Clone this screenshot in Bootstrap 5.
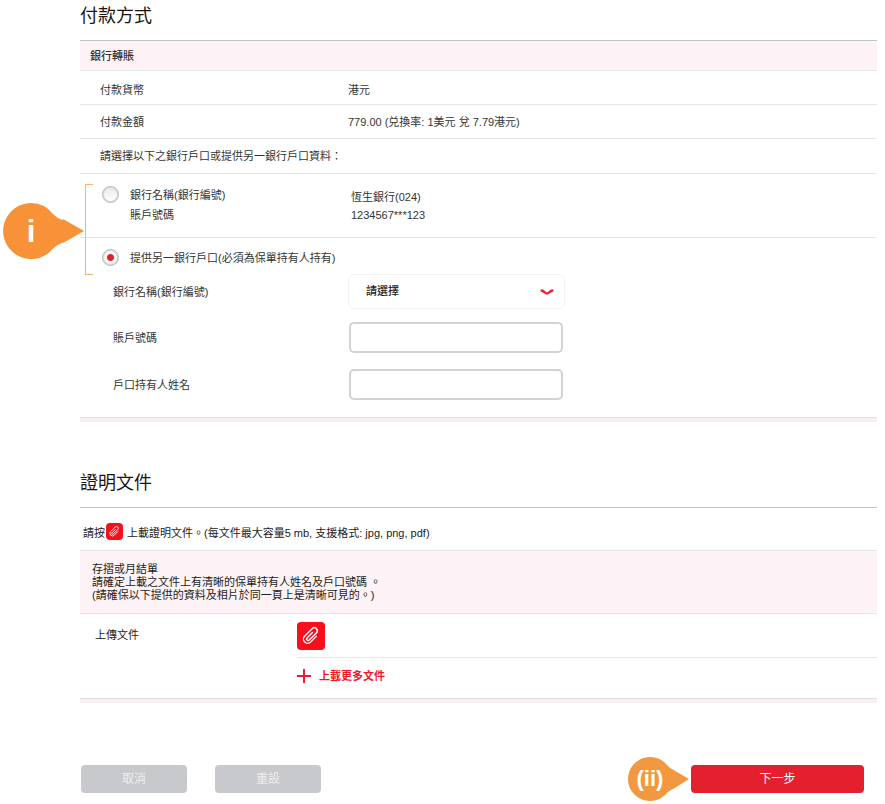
<!DOCTYPE html>
<html lang="zh-Hant">
<head>
<meta charset="utf-8">
<meta name="viewport" content="width=device-width, initial-scale=1">
<title>付款方式</title>
<link href="https://cdn.jsdelivr.net/npm/bootstrap@5.3.0/dist/css/bootstrap.min.css" rel="stylesheet">
<style>
  body { font-family: "Liberation Sans", "Noto Sans CJK TC", sans-serif; font-size: 11px; line-height: 20px; color: #333; background: #fff; }
  main { padding: 0 8px 8px 80px; }
  .sec-title { font-size: 18px; line-height: 32px; font-weight: 400; color: #1e1414; margin: 0; padding-bottom: 8px; }
  .pink { background: #fdf2f5; }
  .line-top { border-top: 1px solid #bfc3ca; }
  .line { border-bottom: 1px solid #e3e5e6; }
  .band { height: 4px; background: #fbeef2; border-top: 1px solid #e0dfe3; box-sizing: content-box; }
  .strip { min-height: 31px; padding-left: 10px; font-weight: 500; }
  .info { min-height: 34px; padding-left: 20px; }
  .info-last { min-height: 35px; }
  .info-name { flex: 0 0 248px; }
  .pick { padding: 11px 0 12px 22px; }
  .pick .pick-name { flex: 0 0 221px; }
  .pick-value { line-height: 18px; padding-top: 3px; }
  .pick-last { padding: 10px 0 6px 22px; }
  .dot { appearance: none; flex: none; width: 17px; height: 17px; margin: 1px 11px 0 0; border: 1px solid #b4b4ba; border-radius: 50%; background: linear-gradient(#e9e9ec, #fff); box-shadow: inset 0 0 0 1px #d8d8dc; }
  .dot:checked { background: radial-gradient(circle, #e5202e 0 3px, #fafafa 4px); }
  .fields { padding: 0 0 17px 33px; }
  .fields label { flex: 0 0 236px; }
  .fields .form-control { width: 214px; height: 31px; border: 2px solid #d2d2d2; border-radius: 5px; font-size: 11px; }
  .fields .form-select { width: 217px; height: 35px; margin-left: -1px; padding: 0 32px 0 17px; border: 1px solid #f3f3f3; border-radius: 6px; font-size: 11px; font-weight: 500; color: #222;
    background-image: url("data:image/svg+xml,%3Csvg xmlns='http://www.w3.org/2000/svg' viewBox='0 0 14 8'%3E%3Cpath d='M1.700 2.500C4.500 3.500 5.500 5.500 7 5.500S9.500 3.500 12.300 2.500' fill='none' stroke='%23ea2334' stroke-width='2.400' stroke-linecap='round'/%3E%3C/svg%3E"); background-size: 14px 8px; background-position: right 10px center; }
  .gap-rows { row-gap: 16px; }
  .gap-rows > :first-child { margin-bottom: -3px; }
  .bracket { position: absolute; left: 5px; top: 10px; width: 8px; height: 91px; border: 1px solid #f9b474; border-right: 0; pointer-events: none; }
  .callout-i { position: absolute; left: -78px; top: 28px; }
  .callout-ii { position: absolute; right: 100%; top: -9px; }
  .second { margin-top: 45px; }
  .note { min-height: 44px; padding: 8px 0 0 3px; color: #222; }
  .note .clip { margin: 0 4px 4px 1px; }
  .notice { line-height: 13px; padding: 12px 12px 11px; color: #222; }
  .clip { flex: none; border: 0; padding: 0; background: #fc0d1b; border-radius: 4px; line-height: 0; }
  .upload { padding: 8px 0 12px 15px; color: #222; }
  .upload-name { flex: 0 0 202px; line-height: 27px; }
  .upload-row { padding-bottom: 7px; }
  .more { color: #f3162a; font-weight: 700; margin-top: 8px; }
  .actions { margin-top: 62px; padding: 0 13px 0 1px; column-gap: 28px; }
  .actions .btn { font-size: 12px; line-height: 18px; padding: 5px 0; border: 0; border-radius: 4px; color: #fff; width: 106px; }
  .actions .btn-off { background: #c8c9cd; color: #eee; }
  .actions .btn-go { background: #e5202e; width: 173px; }
</style>
<script src="https://cdn.jsdelivr.net/npm/bootstrap@5.3.0/dist/js/bootstrap.bundle.min.js"></script>
</head>
<body>
<svg class="d-none" aria-hidden="true">
  <symbol id="paperclip" viewBox="0 0 28 28">
    <path d="M18 10.500V18.500a4.200 4.200 0 0 1-8.400 0V8a3 3 0 0 1 6 0v10.200a1.500 1.500 0 0 1-3 0V10.500" transform="rotate(45 14 14)" fill="none" stroke="#fff" stroke-width="1.400" stroke-linecap="round" stroke-linejoin="round"/>
  </symbol>
</svg>
<main>
  <form>
    <section>
      <h1 class="sec-title">付款方式</h1>
      <div class="strip pink line-top line d-flex align-items-center">銀行轉賬</div>
      <div class="info line d-flex align-items-center pt-1"><span class="info-name">付款貨幣</span><span>港元</span></div>
      <div class="info line d-flex align-items-center"><span class="info-name">付款金額</span><span>779.00 (兑換率: 1美元 兌 7.79港元)</span></div>
      <div class="info info-last line d-flex align-items-center">請選擇以下之銀行戶口或提供另一銀行戶口資料：</div>
      <div class="position-relative" role="radiogroup" aria-label="銀行戶口">
        <div class="pick line d-flex">
          <input class="dot" type="radio" name="account" id="acc-saved">
          <label class="pick-name" for="acc-saved">銀行名稱(銀行編號)<br>賬戶號碼</label>
          <div class="pick-value">恆生銀行(024)<br>1234567***123</div>
        </div>
        <div class="pick-last d-flex">
          <input class="dot" type="radio" name="account" id="acc-other" checked>
          <label for="acc-other">提供另一銀行戶口(必須為保單持有人持有)</label>
        </div>
        <span class="bracket"></span>
        <svg class="callout-i" width="84" height="58" viewBox="0 0 84 58" role="img" aria-label="i">
          <path d="M29 1a28 28 0 1 0 22 45.500Q56 42 61 40.500V41L82 29 61 17v1Q56 17 51 12A28 28 0 0 0 29 1z" fill="#f79238"/>
          <text x="29" y="40" text-anchor="middle" font-size="31" font-weight="700" fill="#fff">i</text>
        </svg>
      </div>
      <div class="fields gap-rows d-flex flex-column">
        <div class="d-flex align-items-center"><label for="bank">銀行名稱(銀行編號)</label>
          <select class="form-select" id="bank"><option>請選擇</option></select></div>
        <div class="d-flex align-items-center"><label for="number">賬戶號碼</label><input class="form-control" id="number" type="text"></div>
        <div class="d-flex align-items-center"><label for="holder">戶口持有人姓名</label><input class="form-control" id="holder" type="text"></div>
      </div>
      <div class="band"></div>
    </section>

    <section class="second">
      <h2 class="sec-title">證明文件</h2>
      <div class="note line-top line d-flex align-items-center">
        <span>請按</span>
        <span class="clip"><svg width="17" height="17" aria-hidden="true"><use href="#paperclip"/></svg></span>
        <span>上載證明文件。(每文件最大容量5 mb, 支援格式: jpg, png, pdf)</span>
      </div>
      <div class="notice pink line">存摺或月結單<br>請確定上載之文件上有清晰的保單持有人姓名及戶口號碼 。<br>(請確保以下提供的資料及相片於同一頁上是清晰可見的。)</div>
      <div class="upload d-flex">
        <span class="upload-name">上傳文件</span>
        <div class="flex-grow-1">
          <div class="upload-row line d-flex">
            <button class="clip" type="button" aria-label="上傳文件"><svg width="28" height="28" aria-hidden="true"><use href="#paperclip"/></svg></button>
          </div>
          <button class="more d-flex align-items-center border-0 bg-transparent p-0" type="button">
            <svg class="me-2" width="14" height="14" viewBox="0 0 14 14" aria-hidden="true"><path d="M7 0v14M0 7h14" stroke="#e5202e" stroke-width="2"/></svg>上載更多文件
          </button>
        </div>
      </div>
      <div class="band"></div>
    </section>

    <div class="actions d-flex">
      <button class="btn btn-off" type="button">取消</button>
      <button class="btn btn-off" type="reset">重設</button>
      <div class="position-relative ms-auto">
        <svg class="callout-ii" width="64" height="46" viewBox="0 0 64 46" role="img" aria-label="(ii)">
          <path d="M23 1a22 22 0 1 0 17 36Q43 34 47 32.500L62 23 44 12.500Q42 11 40 9A22 22 0 0 0 23 1z" fill="#f2983f"/>
          <text x="23" y="30" text-anchor="middle" font-size="22" font-weight="700" fill="#fff">(ii)</text>
        </svg>
        <button class="btn btn-go" type="submit">下一步</button>
      </div>
    </div>
  </form>
</main>
</body>
</html>
